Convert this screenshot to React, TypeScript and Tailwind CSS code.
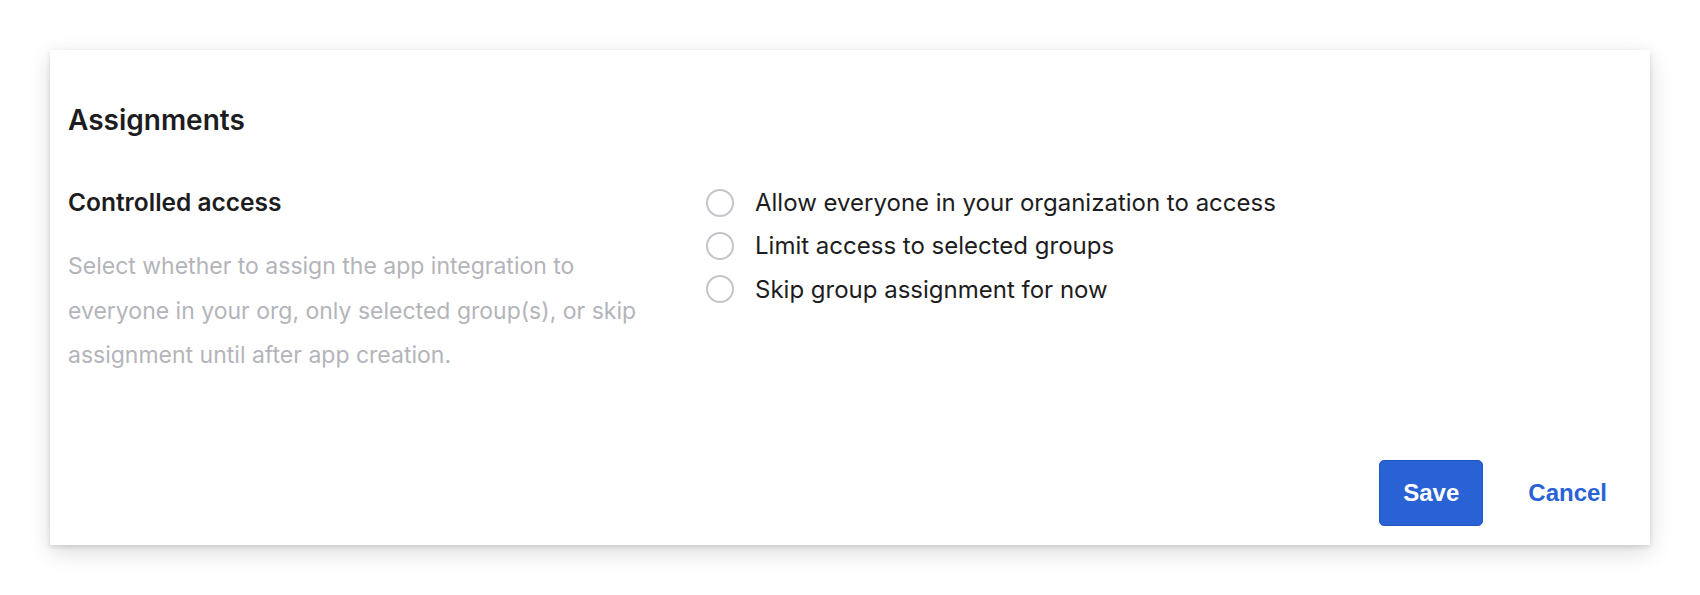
import React from "react";

const options = [
  "Allow everyone in your organization to access",
  "Limit access to selected groups",
  "Skip group assignment for now",
];

export default function App() {
  return (
    <div className="w-[1700px] h-[595px] bg-white p-[50px]" style={{ fontFamily: "Inter, 'Noto Sans', sans-serif" }}>
      <div className="w-[1600px] h-[495px] bg-white flex flex-col shadow-[0_7px_22px_rgba(0,0,0,0.14),0_2px_5px_rgba(0,0,0,0.12)]">
        <div className="pt-[52px] pl-[18px]">
          <h2 className="text-[28px] leading-[36px] font-semibold text-[#1d1d21]">Assignments</h2>
        </div>
        <div className="flex mt-[43px] pl-[18px]">
          <div className="w-[638px] pt-[4px]">
            <h3 className="text-[24.5px] leading-[34px] font-semibold text-[#1d1d21]">Controlled access</h3>
            <p className="mt-[25px] text-[23px] leading-[44.5px] text-[#b4b4bb]">
              Select whether to assign the app integration to
              <br />
              everyone in your org, only selected group(s), or skip
              <br />
              assignment until after app creation.
            </p>
          </div>
          <div className="flex flex-col">
            {options.map((o) => (
              <label key={o} className="flex items-center h-[43.4px]">
                <span className="w-[28px] h-[28px] rounded-full border-[2.5px] border-[#c4c4ca] bg-white shrink-0" />
                <span className="ml-[21px] text-[24px] leading-[43.4px] text-[#1d1d21]">{o}</span>
              </label>
            ))}
          </div>
        </div>
        <div className="mt-auto flex items-center justify-end pr-[43px] pb-[19px] gap-[45px]" style={{ fontFamily: "'Liberation Sans', Arial, sans-serif" }}>
          <button className="w-[104px] h-[66px] rounded-[5px] bg-[#2962d4] border border-[#1f56c6] text-white text-[24px] font-bold">
            Save
          </button>
          <button className="text-[#2962d4] text-[24px] font-bold">Cancel</button>
        </div>
      </div>
    </div>
  );
}
